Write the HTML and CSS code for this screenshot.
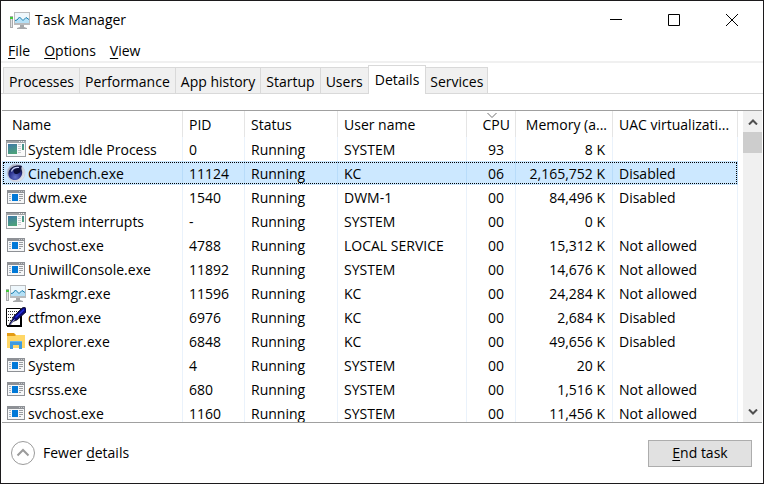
FILE: index.html
```html
<!DOCTYPE html>
<html lang="en">
<head>
<meta charset="utf-8">
<title>Task Manager</title>
<link rel="stylesheet" href="styles.css">
</head>
<body>
<svg class="defs" aria-hidden="true">
  <defs>
    <linearGradient id="g-idle" x1="0" y1="0" x2="0.6" y2="1"><stop offset="0" stop-color="#3f78a8"/><stop offset="1" stop-color="#4fa873"/></linearGradient>
    <radialGradient id="g-ring" cx="0.4" cy="0.4" r="0.6"><stop offset="0.5" stop-color="#a9aebf"/><stop offset="1" stop-color="#e4e6ee"/></radialGradient>
    <radialGradient id="g-ball" cx="0.5" cy="0.8" r="0.7"><stop offset="0" stop-color="#6472c8"/><stop offset="0.6" stop-color="#2b3390"/><stop offset="1" stop-color="#10143f"/></radialGradient>
  </defs>
  <symbol id="i-idle" viewBox="0 0 20 20">
    <g shape-rendering="crispEdges">
      <path fill="#a0a3a6" d="M0 1h20v17H0z"/><path fill="#7d8185" d="M0 1h20v1H0z"/><path fill="#fafafa" d="M1 4h18v13H1z"/>
      <path fill="#f0f0f0" d="M13 2h1v1h-1zM15 2h1v1h-1zM17 2h1v1h-1z"/>
      <path fill="url(#g-idle)" d="M2 5h9v10H2zM16 5h2v6h-2z"/>
      <path fill="#c9ccd0" d="M12 5h3v1h-3zM12 7h3v1h-3zM12 9h3v1h-3zM12 11h3v1h-3zM12 13h3v1h-3z"/>
    </g>
  </symbol>
  <symbol id="i-app" viewBox="0 0 20 20">
    <g shape-rendering="crispEdges">
      <path fill="#8e9196" d="M1 3h18v14H1z"/><path fill="#f6f7f8" d="M2 6h16v10H2z"/>
      <path fill="#c8cacd" d="M13 4h1v1h-1zM15 4h1v1h-1zM17 4h1v1h-1z"/>
      <path fill="#0078d7" d="M6 7h6v7H6z"/>
      <path fill="#a9b6c4" d="M3 7h2v1H3zM3 9h2v1H3zM3 11h2v1H3zM3 13h2v1H3z"/>
      <path fill="#9a9da1" d="M13 7h4v1h-4zM13 9h4v1h-4zM13 11h4v1h-4zM13 13h2v1h-2z"/>
    </g>
  </symbol>
  <symbol id="i-cine" viewBox="0 0 20 20">
    <circle cx="10" cy="10" r="9" fill="url(#g-ring)" stroke="#c3c7d6" stroke-width="0.6"/>
    <path fill="url(#g-ball)" d="M16 3C10 1.500 3 4 2.400 10.500 2.200 15 6 17.500 9.500 17 14 16.500 17 12 16 8 15.400 6 15 5 16 3z"/>
    <ellipse cx="11" cy="8" rx="3.500" ry="2.800" fill="#0c0f38" transform="rotate(-25 11 8)"/>
    <path d="M5.500 8.500C6.500 5.500 9.500 4.200 13 4.500" fill="none" stroke="#c7d0f5" stroke-width="1.200"/>
  </symbol>
  <symbol id="i-task" viewBox="0 0 20 20">
    <path fill="#a9abad" d="M0 6h3v12H0z"/><path fill="#e4e5e6" d="M1 9h1v8H1z"/><path fill="#45c63c" d="M0 7h3v2H0z"/>
    <path fill="#b9bbbd" d="M4 2h16v13H4z"/><path fill="#eef7fc" d="M5 3h14v10H5z"/>
    <path fill="#b5e0f6" d="M5 10.500L7 10l2.500-3 3.500 3.500L16 7.500l3 2V13H5z"/>
    <path fill="none" stroke="#1b7fae" stroke-width="1" d="M5 10.500L7 10l2.500-3 3.500 3.500L16 7.500l3 2"/>
    <path fill="#a6a8aa" d="M10 15h4v2l3 1v1H7v-1l3-1z"/>
  </symbol>
  <symbol id="i-ctf" viewBox="0 0 20 20">
    <path fill="#fff" stroke="#000" d="M.5 1.500h14v17H.5z"/>
    <path fill="#000" d="M14 9h2v11h-2zM1 18h14v2H1z"/>
    <path fill="none" stroke="#333" stroke-dasharray="1 1" d="M2 4.500h11M2 7.500h9M2 10.500h7M2 13.500h4"/>
    <path fill="#0a0a78" stroke="#000" stroke-width="0.700" d="M18.500 0L20 1.500V5l-9 8-4 1.500L4 18.500l-1 0 1-2.500 2-3L8 9l8-8z"/>
    <path fill="none" stroke="#2431e0" stroke-width="1.500" d="M9.500 10.500L18 2.500"/>
    <path fill="none" stroke="#dce0ff" stroke-width="0.800" d="M4.500 17.500l4-5"/>
  </symbol>
  <symbol id="i-folder" viewBox="0 0 20 20">
    <path fill="#e39b14" d="M1 2h7l2 2v3H1z"/><path fill="#ffd767" d="M1 5h8l1-1h9v13H1z"/>
    <path fill="#3f9be0" d="M4 10h12v8h-3v-4H7v4H4z"/><path fill="#65b7ee" d="M4 10h12v1H4z"/>
  </symbol>
</svg>

<main class="window">
  <header class="titlebar">
    <svg class="icon"><use href="#i-task"/></svg>
    <h1>Task Manager</h1>
    <div class="controls">
      <button aria-label="Minimize"><svg viewBox="0 0 12 12"><path d="M0 5.500h12"/></svg></button>
      <button aria-label="Maximize"><svg viewBox="0 0 12 12"><path d="M.5 .5h11v11H.5z"/></svg></button>
      <button aria-label="Close"><svg viewBox="0 0 12 12"><path d="M0 0l12 12M12 0L0 12"/></svg></button>
    </div>
  </header>

  <nav class="menu">
    <button><u>F</u>ile</button>
    <button><u>O</u>ptions</button>
    <button><u>V</u>iew</button>
  </nav>

  <div class="tabs" role="tablist">
    <button role="tab">Processes</button>
    <button role="tab">Performance</button>
    <button role="tab">App history</button>
    <button role="tab">Startup</button>
    <button role="tab">Users</button>
    <button role="tab" class="active" aria-selected="true">Details</button>
    <button role="tab">Services</button>
  </div>

  <section class="list">
    <div class="viewport">
      <table>
        <colgroup><col class="c-name"><col class="c-pid"><col class="c-status"><col class="c-user"><col class="c-cpu"><col class="c-mem"><col></colgroup>
        <thead>
          <tr><th class="name">Name</th><th>PID</th><th>Status</th><th>User name</th><th class="cpu">CPU<svg class="sort" viewBox="0 0 10 5"><path d="M.5 0L5 4.500 9.500 0"/></svg></th><th class="mem">Memory (a...</th><th>UAC virtualizati...</th></tr>
        </thead>
        <tbody>
          <tr><td><span class="proc"><svg class="icon"><use href="#i-idle"/></svg>System Idle Process</span></td><td>0</td><td>Running</td><td>SYSTEM</td><td class="cpu">93</td><td class="mem">8 K</td><td></td></tr>
          <tr class="selected"><td><span class="proc"><svg class="icon"><use href="#i-cine"/></svg>Cinebench.exe</span></td><td>11124</td><td>Running</td><td>KC</td><td class="cpu">06</td><td class="mem">2,165,752 K</td><td>Disabled</td></tr>
          <tr><td><span class="proc"><svg class="icon"><use href="#i-app"/></svg>dwm.exe</span></td><td>1540</td><td>Running</td><td>DWM-1</td><td class="cpu">00</td><td class="mem">84,496 K</td><td>Disabled</td></tr>
          <tr><td><span class="proc"><svg class="icon"><use href="#i-idle"/></svg>System interrupts</span></td><td>-</td><td>Running</td><td>SYSTEM</td><td class="cpu">00</td><td class="mem">0 K</td><td></td></tr>
          <tr><td><span class="proc"><svg class="icon"><use href="#i-app"/></svg>svchost.exe</span></td><td>4788</td><td>Running</td><td>LOCAL SERVICE</td><td class="cpu">00</td><td class="mem">15,312 K</td><td>Not allowed</td></tr>
          <tr><td><span class="proc"><svg class="icon"><use href="#i-app"/></svg>UniwillConsole.exe</span></td><td>11892</td><td>Running</td><td>SYSTEM</td><td class="cpu">00</td><td class="mem">14,676 K</td><td>Not allowed</td></tr>
          <tr><td><span class="proc"><svg class="icon"><use href="#i-task"/></svg>Taskmgr.exe</span></td><td>11596</td><td>Running</td><td>KC</td><td class="cpu">00</td><td class="mem">24,284 K</td><td>Not allowed</td></tr>
          <tr><td><span class="proc"><svg class="icon"><use href="#i-ctf"/></svg>ctfmon.exe</span></td><td>6976</td><td>Running</td><td>KC</td><td class="cpu">00</td><td class="mem">2,684 K</td><td>Disabled</td></tr>
          <tr><td><span class="proc"><svg class="icon"><use href="#i-folder"/></svg>explorer.exe</span></td><td>6848</td><td>Running</td><td>KC</td><td class="cpu">00</td><td class="mem">49,656 K</td><td>Disabled</td></tr>
          <tr><td><span class="proc"><svg class="icon"><use href="#i-app"/></svg>System</span></td><td>4</td><td>Running</td><td>SYSTEM</td><td class="cpu">00</td><td class="mem">20 K</td><td></td></tr>
          <tr><td><span class="proc"><svg class="icon"><use href="#i-app"/></svg>csrss.exe</span></td><td>680</td><td>Running</td><td>SYSTEM</td><td class="cpu">00</td><td class="mem">1,516 K</td><td>Not allowed</td></tr>
          <tr><td><span class="proc"><svg class="icon"><use href="#i-app"/></svg>svchost.exe</span></td><td>1160</td><td>Running</td><td>SYSTEM</td><td class="cpu">00</td><td class="mem">11,456 K</td><td>Not allowed</td></tr>
        </tbody>
      </table>
    </div>
    <div class="scrollbar">
      <button aria-label="Scroll up"><svg viewBox="0 0 10 6"><path d="M1 5.500l4-4 4 4"/></svg></button>
      <div class="thumb"></div>
      <button class="down" aria-label="Scroll down"><svg viewBox="0 0 10 6"><path d="M1 .5l4 4 4-4"/></svg></button>
    </div>
  </section>

  <footer>
    <button class="fewer"><svg viewBox="0 0 26 26"><circle cx="13" cy="13" r="11.500"/><path d="M7.500 15.500L13 10l5.500 5.500"/></svg><span>Fewer <u>d</u>etails</span></button>
    <button class="end"><span><u>E</u>nd task</span></button>
  </footer>
</main>
</body>
</html>
```
FILE: styles.css
```css
* { box-sizing: border-box; }
body {
  margin: 0;
  font: 14px/20px "Open Sans", "Noto Sans", sans-serif;
  color: #000;
}
button {
  font: inherit;
  color: inherit;
  background: none;
  border: 0;
  padding: 0;
}
svg { display: block; }
u { text-underline-offset: 2px; text-decoration-thickness: 1px; }
.defs { position: absolute; width: 0; height: 0; }
.icon { width: 20px; height: 20px; flex: none; }

.window {
  height: 100vh;
  display: flex;
  flex-direction: column;
  background: #fff;
  border: 1px solid #1c1a1c;
}

.titlebar {
  display: flex;
  align-items: center;
  height: 38px;
  padding-left: 9px;
  gap: 5px;
}
.titlebar h1 { margin: 0; font-size: 14px; font-weight: 400; }
.controls { display: flex; margin: 0 2px 0 auto; height: 100%; }
.controls button { width: 58px; display: grid; place-items: center; }
.controls svg { width: 12px; height: 12px; fill: none; stroke: #000; }

.menu {
  display: flex;
  gap: 14px;
  height: 24px;
  padding: 2px 7px 0;
  border-bottom: 2px solid #f0f0f0;
}

.tabs {
  display: flex;
  align-items: flex-end;
  height: 31px;
  padding-left: 2px;
  border-bottom: 1px solid #d9d9d9;
}
.tabs button {
  height: 26px;
  padding: 2px 5px 0;
  background: #f0f0f0;
  border: 1px solid #d9d9d9;
  border-right-width: 0;
  border-bottom: 0;
}
.tabs button:last-child { border-left-width: 0; border-right-width: 1px; padding: 2px 4px 0; }
.tabs .active {
  height: 29px;
  margin-bottom: -1px;
  padding: 0 6px;
  background: #fff;
  border-right-width: 1px;
}

.list {
  flex: 1;
  min-height: 0;
  display: flex;
  gap: 5px;
  margin: 16px 1px 0;
  border-top: 1px solid #a0a0a0;
  border-bottom: 1px solid #a0a0a0;
}
.viewport { flex: 1; overflow: hidden; }
table { width: 100%; table-layout: fixed; border-collapse: separate; border-spacing: 0; }
.c-name { width: 181px; }
.c-pid { width: 62px; }
.c-status { width: 93px; }
.c-user { width: 129px; }
.c-cpu { width: 49px; }
.c-mem { width: 97px; }
th, td {
  height: 24px;
  padding: 2px 0 0 6px;
  border-right: 1px solid #eaf2fb;
  text-align: left;
  font-weight: 400;
  white-space: nowrap;
}
th { height: 26px; border-color: #e5e5e5; }
td:first-child { padding-left: 4px; }
th.name { padding-left: 10px; }
.cpu, .mem { padding-left: 0; text-align: right; }
th.cpu { position: relative; padding-right: 5px; }
th.mem { padding-right: 5px; }
td.cpu { padding-right: 11px; }
td.mem { padding-right: 7px; }
.sort { position: absolute; top: 2px; left: 20px; width: 10px; height: 5px; fill: none; stroke: #707070; }
.proc { display: flex; align-items: center; gap: 2px; height: 20px; }
.proc .icon { margin-bottom: 2px; }

.selected td { background: #cce8ff; border-right-color: #b8dcfa; }
.selected { outline: 1px dotted #000; outline-offset: -2px; }

.scrollbar { width: 19px; display: flex; flex-direction: column; background: #f0f0f0; }
.scrollbar button { height: 21px; display: grid; place-items: center; }
.scrollbar svg { width: 10px; height: 6px; fill: none; stroke: #505050; stroke-width: 2; }
.scrollbar .down { margin-top: auto; }
.thumb { height: 21px; background: #cdcdcd; }

footer {
  height: 60px;
  flex: none;
  display: flex;
  align-items: center;
  justify-content: space-between;
  padding: 0 11px 0 9px;
}
.fewer { display: flex; align-items: center; gap: 7px; }
.fewer svg { width: 26px; height: 26px; fill: none; stroke: #9b9b9b; }
.fewer path { stroke-width: 2; }
.end {
  width: 104px;
  height: 27px;
  background: #e1e1e1;
  border: 1px solid #adadad;
}
```
